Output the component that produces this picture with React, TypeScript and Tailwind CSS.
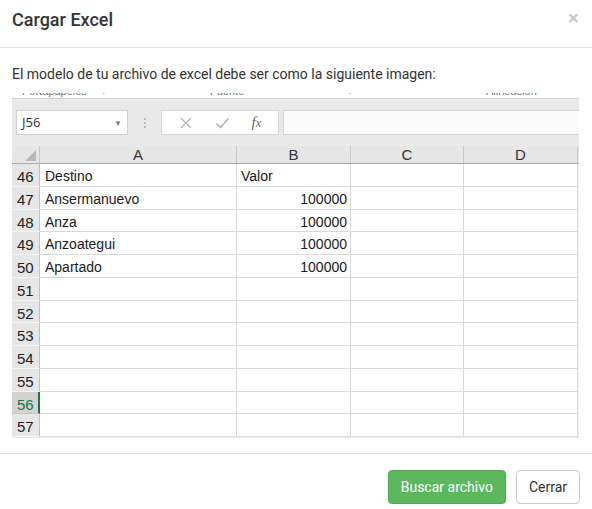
import React from "react";

const rows = [
  { n: 46, a: "Destino", b: "Valor", bAlign: "left" },
  { n: 47, a: "Ansermanuevo", b: "100000" },
  { n: 48, a: "Anza", b: "100000" },
  { n: 49, a: "Anzoategui", b: "100000" },
  { n: 50, a: "Apartado", b: "100000" },
  { n: 51 },
  { n: 52 },
  { n: 53 },
  { n: 54 },
  { n: 55 },
  { n: 56, selected: true },
  { n: 57 },
];

function ExcelPicture() {
  return (
    <div className="w-[567px] h-[345px] overflow-hidden bg-[#e9e9e9] font-['Liberation_Sans',Arial,sans-serif]">
      {/* ribbon labels cut off at the top */}
      <div className="h-[5px] bg-white overflow-hidden relative text-[11px] text-[#777] leading-[12px]">
        <span className="absolute left-[10px] top-[-8px]">Portapapeles</span>
        <span className="absolute left-[91px] top-[-8px]">⌐</span>
        <span className="absolute left-[198px] top-[-8px]">Fuente</span>
        <span className="absolute left-[337px] top-[-8px]">⌐</span>
        <span className="absolute left-[474px] top-[-8px]">Alineación</span>
      </div>
      <div className="h-px bg-[#d2d2d2]" />
      {/* formula bar */}
      <div className="flex items-start h-[47px] pt-[11px] bg-[#e9e9e9]">
        <div className="ml-[4px] w-[112px] h-[25px] bg-white border border-[#d0d0d0] flex items-center justify-between px-[5px] font-['Open_Sans',sans-serif] text-[13px] text-[#333]">
          <span>J56</span>
          <span className="text-[8px] text-[#777]">▼</span>
        </div>
        <div className="w-[33px] h-[25px] flex items-center justify-center">
          <div className="flex flex-col gap-[2px]">
            <span className="w-[2px] h-[2px] bg-[#b8b8b8]" />
            <span className="w-[2px] h-[2px] bg-[#b8b8b8]" />
            <span className="w-[2px] h-[2px] bg-[#b8b8b8]" />
          </div>
        </div>
        <div className="w-[118px] h-[25px] bg-white border border-[#d6d6d6] flex items-center justify-around px-[6px]">
          <svg width="14" height="14" viewBox="0 0 14 14" stroke="#b5b5b5" strokeWidth="1.3" fill="none">
            <path d="M2 2 L12 12 M12 2 L2 12" />
          </svg>
          <svg width="15" height="14" viewBox="0 0 15 14" stroke="#b5b5b5" strokeWidth="1.6" fill="none">
            <path d="M1.5 7.5 L5.5 11.5 L13.5 2.5" />
          </svg>
          <span className="font-['Liberation_Serif',serif] italic text-[15px] text-[#666] leading-none">
            f<span className="text-[12px]">x</span>
          </span>
        </div>
        <div className="ml-[4px] flex-1 h-[25px] bg-[#fbfbfb] border border-[#d6d6d6] border-r-0" />
      </div>
      {/* column headers */}
      <div className="flex h-[18px] bg-[#e6e6e6] border-b border-[#ababab] text-[15px] text-[#333] leading-[18px]">
        <div className="w-[28px] border-r border-[#c8c8c8] relative">
          <svg className="absolute right-[3px] bottom-[2px]" width="11" height="11" viewBox="0 0 11 11">
            <path d="M11 0 L11 11 L0 11 Z" fill="#b9b9b9" />
          </svg>
        </div>
        <div className="w-[197px] border-r border-[#c8c8c8] text-center">A</div>
        <div className="w-[114px] border-r border-[#c8c8c8] text-center">B</div>
        <div className="w-[113px] border-r border-[#c8c8c8] text-center">C</div>
        <div className="w-[114px] border-r border-[#c8c8c8] text-center">D</div>
        <div className="flex-1" />
      </div>
      {/* rows */}
      <div className="bg-white">
        {rows.map((r) => (
          <div key={r.n} className="flex h-[22.75px] text-[14px] text-[#1a1a1a] leading-[25px]">
            <div
              className={
                r.selected
                  ? "w-[28px] bg-[#d3d3d3] border-r-2 border-[#217346] border-b border-b-[#c6c6c6] text-[#217346] text-[15px] pl-[5px]"
                  : "w-[28px] bg-[#e6e6e6] border-r border-[#c0c0c0] border-b border-b-[#f4f4f4] text-[#222] text-[15px] pl-[5px]"
              }
            >
              {r.n}
            </div>
            <div className="w-[197px] border-r border-b border-[#dadada] pl-[5px]">{r.a}</div>
            <div
              className={
                r.bAlign === "left"
                  ? "w-[114px] border-r border-b border-[#dadada] pl-[4px]"
                  : "w-[114px] border-r border-b border-[#dadada] pr-[3px] text-right"
              }
            >
              {r.b}
            </div>
            <div className="w-[113px] border-r border-b border-[#dadada]" />
            <div className="w-[114px] border-r border-b border-[#dadada]" />
            <div className="flex-1 bg-[#f2f2f2]" />
          </div>
        ))}
      </div>
    </div>
  );
}

export default function App() {
  return (
    <div className="w-[592px] h-[509px] bg-white overflow-hidden font-['Roboto',sans-serif] text-[#333]">
      <div className="h-[48px] border-b border-[#e5e5e5] flex items-start justify-between pl-[12px] pr-[13px] pt-[7px]">
        <h4 className="text-[18px] font-medium leading-[25px] text-[#333]">Cargar Excel</h4>
        <button className="text-[21px] font-bold leading-none text-black opacity-20 mt-[1px]">×</button>
      </div>
      <div className="px-[12px] pt-[16px] pb-[15px]">
        <p className="text-[14px] leading-[20px]">El modelo de tu archivo de excel debe ser como la siguiente imagen:</p>
        <div className="mt-[9px]">
          <ExcelPicture />
        </div>
      </div>
      <div className="border-t border-[#e5e5e5] pt-[16px] pr-[12px] flex justify-end gap-[10px]">
        <button className="h-[34px] px-[12px] text-[14px] text-white bg-[#5cb85c] border border-[#4cae4c] rounded-[4px]">
          Buscar archivo
        </button>
        <button className="h-[34px] px-[12px] text-[14px] text-[#333] bg-white border border-[#ccc] rounded-[4px]">
          Cerrar
        </button>
      </div>
    </div>
  );
}
